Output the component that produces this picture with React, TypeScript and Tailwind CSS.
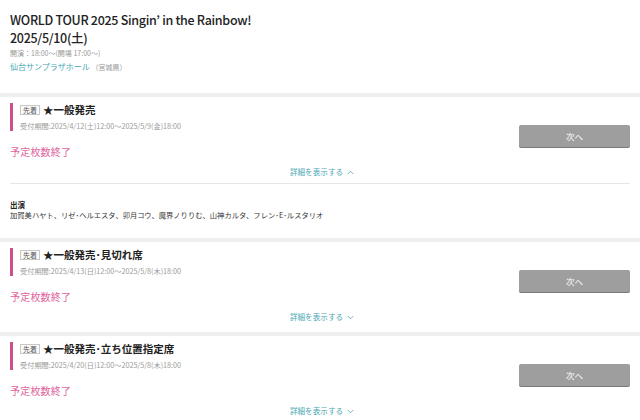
import React from 'react';

type Sale = {
  title: string;
  period: string;
  open?: boolean;
  cast?: string;
};

const sales: Sale[] = [
  {
    title: '★一般発売',
    period: '受付期間:2025/4/12(土)12:00〜2025/5/9(金)18:00',
    open: true,
    cast: '加賀美ハヤト、リゼ･ヘルエスタ、卯月コウ、魔界ノりりむ、山神カルタ、フレン･E･ルスタリオ',
  },
  {
    title: '★一般発売･見切れ席',
    period: '受付期間:2025/4/13(日)12:00〜2025/5/8(木)18:00',
  },
  {
    title: '★一般発売･立ち位置指定席',
    period: '受付期間:2025/4/20(日)12:00〜2025/5/8(木)18:00',
  },
];

const Chevron: React.FC<{ up?: boolean }> = ({ up }) => (
  <svg width="7" height="5" viewBox="0 0 7 5" className="ml-[4px]">
    <path
      d={up ? 'M0.8 4 L3.5 1.2 L6.2 4' : 'M0.8 1 L3.5 3.8 L6.2 1'}
      fill="none"
      stroke="#4aa8b4"
      strokeWidth="0.8"
    />
  </svg>
);

const SaleCard: React.FC<{ sale: Sale }> = ({ sale }) => {
  return (
    <div className="bg-white px-[10px] pt-[6px]">
      <div className="flex">
        <div className="flex-1">
          <div className="border-l-[3px] border-[#cf4f8d] pl-[7px] h-[28px]">
            <div className="flex items-center h-[14px]">
              <span className="border border-[#c8c8c8] text-[#555] text-[7px] leading-[8px] px-[2px] bg-[#fafafa]">
                先着
              </span>
              <span className="ml-[3px] text-[10.5px] font-bold text-[#222] leading-none">{sale.title}</span>
            </div>
            <div className="text-[7.2px] text-[#9a9a9a] mt-[4px] leading-[10px]">{sale.period}</div>
          </div>
          <div className="text-[#e0629d] text-[10px] mt-[14px] leading-[14px] tracking-[0.2px]">予定枚数終了</div>
        </div>
        <div className="pt-[22px]">
          <button className="block w-[111px] h-[22px] bg-[#9e9e9e] rounded-[2px] text-white text-[8.5px] shadow-[0_1px_0_#7a7a7a]">
            次へ
          </button>
        </div>
      </div>
      <div className="flex justify-center items-center text-[#4aa8b4] text-[7.6px] mt-[7px] h-[12px] pl-[4px]">
        詳細を表示する
        <Chevron up={sale.open} />
      </div>
      {sale.cast ? (
        <div>
          <div className="border-t border-[#e6e6e6] mt-[5px]" />
          <div className="pt-[15px] pb-[17px]">
            <div className="text-[7.5px] font-bold text-[#222] leading-[11px]">出演</div>
            <div className="text-[7.3px] text-[#333] leading-[11px]">{sale.cast}</div>
          </div>
        </div>
      ) : (
        <div className="h-[9px]" />
      )}
    </div>
  );
};

export default function App() {
  return (
    <div
      className="w-[640px] h-[420px] overflow-hidden bg-[#efefef]"
      style={{ fontFamily: '"Noto Sans CJK JP", "Noto Sans", sans-serif' }}
    >
      <div className="bg-white px-[10px] pt-[11px] h-[93px]">
        <div className="text-[12.5px] text-[#222] leading-[18px] tracking-[-0.3px] font-medium">WORLD TOUR 2025 Singin’ in the Rainbow!</div>
        <div className="text-[12.5px] text-[#222] leading-[18px] tracking-[-0.3px] font-medium">2025/5/10(土)</div>
        <div className="text-[7px] text-[#999] leading-[12px]">開演：18:00〜(開場 17:00〜)</div>
        <div className="text-[8px] text-[#46a7b4] leading-[12px] mt-[2px]">
          仙台サンプラザホール <span className="text-[#999] text-[7px]">（宮城県）</span>
        </div>
      </div>
      <div className="flex flex-col gap-[4px] pt-[4px]">
        {sales.map((s) => (
          <SaleCard key={s.title} sale={s} />
        ))}
      </div>
    </div>
  );
}
